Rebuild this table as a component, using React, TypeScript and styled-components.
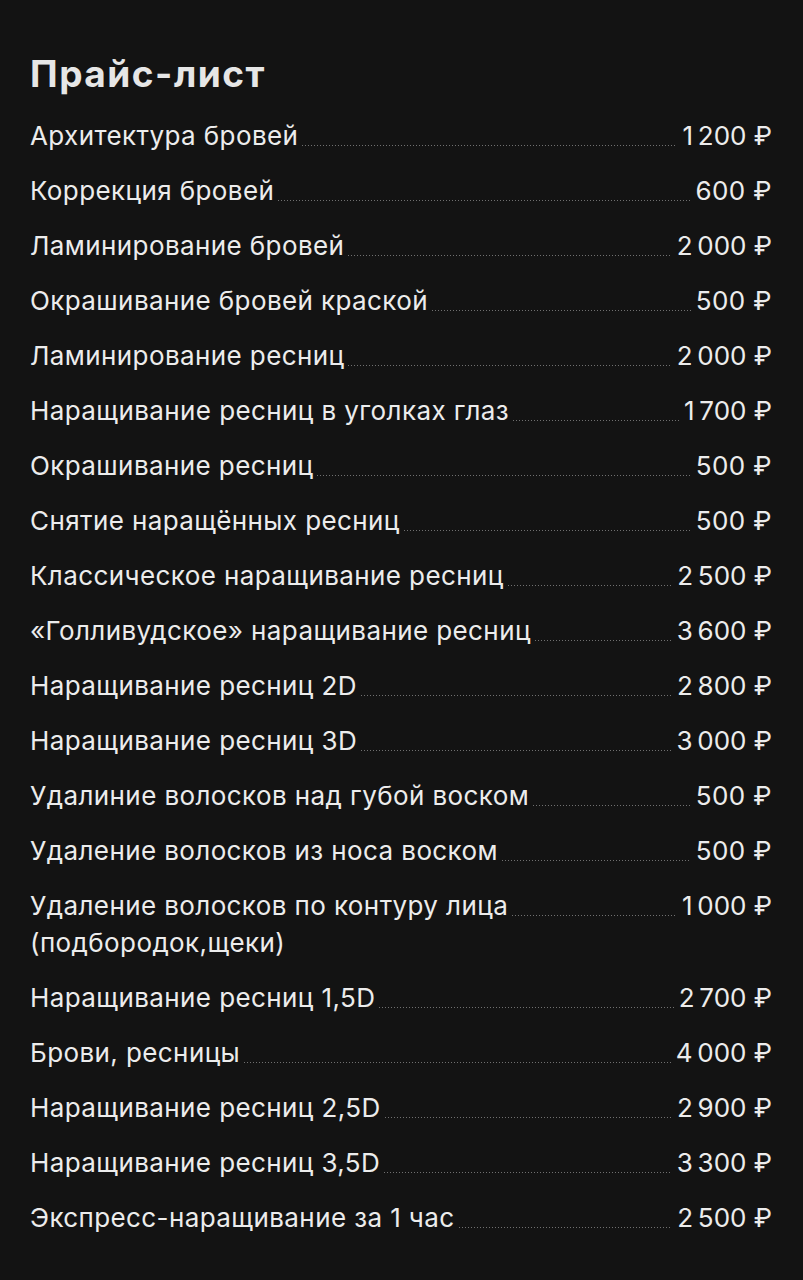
import React from "react";
import styled, { createGlobalStyle } from "styled-components";

const Global = createGlobalStyle`
  html, body { margin: 0; padding: 0; background: #131313; }
  body { font-family: Inter, "Noto Sans", sans-serif; color: #ececec; }
`;

const Page = styled.main`
  width: 803px;
  min-height: 1280px;
  box-sizing: border-box;
  padding: 52px 31px 0 30px;
  background: #131313;
`;

const Title = styled.h1`
  margin: 0 0 21px;
  font-size: 37px;
  line-height: 44px;
  font-weight: 700;
  color: #e6e6e6;
  letter-spacing: 1.5px;
`;

const List = styled.ul`
  list-style: none;
  margin: 0;
  padding: 0;
  display: flex;
  flex-direction: column;
  gap: 18px;
`;

const Item = styled.li`
  display: flex;
  flex-direction: column;
  font-size: 26px;
  line-height: 37px;
  letter-spacing: 0.4px;
`;

const Line = styled.div`
  display: flex;
  align-items: flex-start;
`;

const Name = styled.span`
  flex: none;
  white-space: nowrap;
`;

const Leader = styled.span`
  flex: 1;
  min-width: 10px;
  height: 1px;
  margin: 28px 5px 0 3px;
  background-image: radial-gradient(circle, #707070 0.6px, transparent 0.8px);
  background-size: 3px 1px;
  background-repeat: repeat-x;
  background-position: left center;
`;

const Price = styled.span`
  flex: none;
  white-space: nowrap;
`;

const Sub = styled.span`
  display: block;
`;

const items: { name: string; price: string; sub?: string }[] = [
  { name: "Архитектура бровей", price: "1\u202F200 ₽" },
  { name: "Коррекция бровей", price: "600 ₽" },
  { name: "Ламинирование бровей", price: "2\u202F000 ₽" },
  { name: "Окрашивание бровей краской", price: "500 ₽" },
  { name: "Ламинирование ресниц", price: "2\u202F000 ₽" },
  { name: "Наращивание ресниц в уголках глаз", price: "1\u202F700 ₽" },
  { name: "Окрашивание ресниц", price: "500 ₽" },
  { name: "Снятие наращённых ресниц", price: "500 ₽" },
  { name: "Классическое наращивание ресниц", price: "2\u202F500 ₽" },
  { name: "«Голливудское» наращивание ресниц", price: "3\u202F600 ₽" },
  { name: "Наращивание ресниц 2D", price: "2\u202F800 ₽" },
  { name: "Наращивание ресниц 3D", price: "3\u202F000 ₽" },
  { name: "Удалиние волосков над губой воском", price: "500 ₽" },
  { name: "Удаление волосков из носа воском", price: "500 ₽" },
  { name: "Удаление волосков по контуру лица", price: "1\u202F000 ₽", sub: "(подбородок,щеки)" },
  { name: "Наращивание ресниц 1,5D", price: "2\u202F700 ₽" },
  { name: "Брови, ресницы", price: "4\u202F000 ₽" },
  { name: "Наращивание ресниц 2,5D", price: "2\u202F900 ₽" },
  { name: "Наращивание ресниц 3,5D", price: "3\u202F300 ₽" },
  { name: "Экспресс-наращивание за 1 час", price: "2\u202F500 ₽" },
];

export default function App() {
  return (
    <>
      <Global />
      <Page>
        <Title>Прайс-лист</Title>
        <List>
          {items.map((it) => (
            <Item key={it.name}>
              <Line>
                <Name>{it.name}</Name>
                <Leader />
                <Price>{it.price}</Price>
              </Line>
              {it.sub && <Sub>{it.sub}</Sub>}
            </Item>
          ))}
        </List>
      </Page>
    </>
  );
}
